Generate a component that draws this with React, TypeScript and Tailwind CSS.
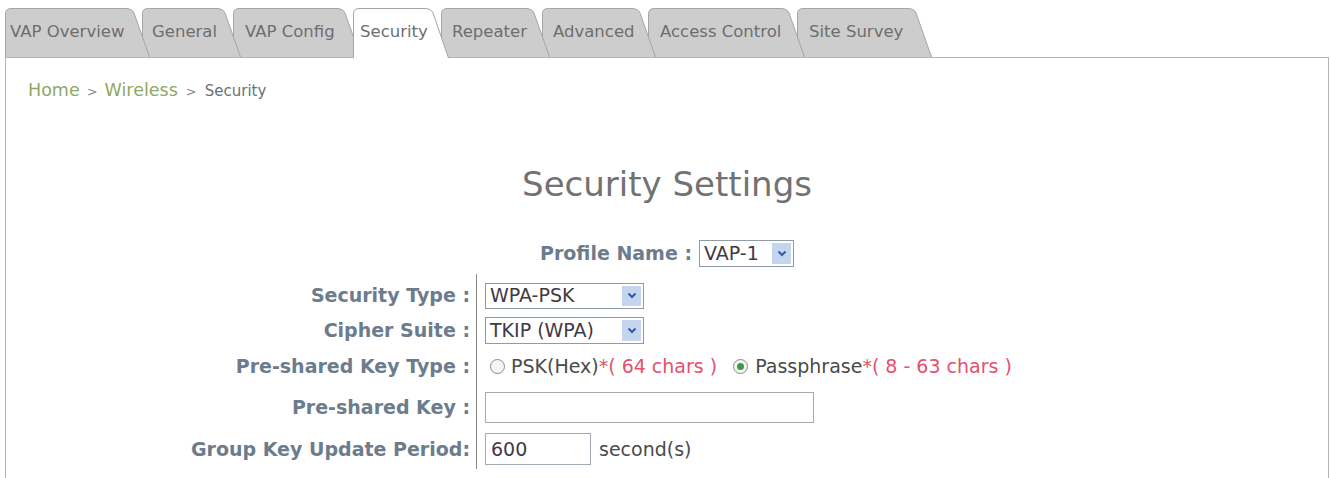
import type { JSX } from "react";

interface TabItem {
  label: string;
  width: number;
  widthClass: string;
  zClass: string;
  padClass: string;
  active?: boolean;
}

const tabs: TabItem[] = [
  { label: "VAP Overview", width: 145, widthClass: "w-[145px]", zClass: "z-[8]", padClass: "pl-[5px]" },
  { label: "General", width: 99, widthClass: "w-[99px]", zClass: "z-[7]", padClass: "pl-[10px]" },
  { label: "VAP Config", width: 128, widthClass: "w-[128px]", zClass: "z-[6]", padClass: "pl-[12px]" },
  { label: "Security", width: 96, widthClass: "w-[96px]", zClass: "z-[20]", padClass: "pl-[7px]", active: true },
  { label: "Repeater", width: 109, widthClass: "w-[109px]", zClass: "z-[4]", padClass: "pl-[11px]" },
  { label: "Advanced", width: 114, widthClass: "w-[114px]", zClass: "z-[3]", padClass: "pl-[11px]" },
  { label: "Access Control", width: 157, widthClass: "w-[157px]", zClass: "z-[2]", padClass: "pl-[12px]" },
  { label: "Site Survey", width: 135, widthClass: "w-[135px]", zClass: "z-[1]", padClass: "pl-[12px]" },
];

function Tab({ tab, first }: { tab: TabItem; first: boolean }): JSX.Element {
  const h = tab.active ? 50 : 49;
  const w = tab.width;
  const s = 18;
  const d = `M0.5 ${h} L0.5 6 Q0.5 0.5 6 0.5 L${w - s - 6} 0.5 Q${w - s} 0.5 ${w - s + 2} 5 L${w - 0.5} ${h}`;
  return (
    <div
      className={`relative flex shrink-0 items-center ${tab.widthClass} ${tab.zClass} ${tab.padClass} ${
        tab.active ? "h-[50px] pb-px" : "h-[49px]"
      } ${first ? "" : "-ml-[8px]"}`}
    >
      <svg className="absolute left-0 top-0" width={w} height={h} viewBox={`0 0 ${w} ${h}`}>
        <path d={d} fill={tab.active ? "#ffffff" : "#cdcdcd"} stroke="#a5a5a5" strokeWidth="1" />
      </svg>
      <span className="relative text-[16.5px] leading-none text-[#6e6e6e]">{tab.label}</span>
    </div>
  );
}

function Chevron(): JSX.Element {
  return (
    <svg width="10" height="7" viewBox="0 0 10 7">
      <polyline points="1.5,1.5 5,5 8.5,1.5" fill="none" stroke="#3559a6" strokeWidth="2" />
    </svg>
  );
}

function Select({ value, widthClass, heightClass }: { value: string; widthClass: string; heightClass: string }): JSX.Element {
  return (
    <div className={`flex items-stretch border border-[#8f9ba7] bg-white ${widthClass} ${heightClass}`}>
      <span className="flex flex-1 items-center pl-[4px] text-[19px] leading-none text-[#3f3a44]">{value}</span>
      <span className="my-[2px] mr-[2px] flex w-[19px] items-center justify-center bg-[#c5d5ef]">
        <Chevron />
      </span>
    </div>
  );
}

function Radio({ checked }: { checked?: boolean }): JSX.Element {
  return (
    <span className="flex h-[15px] w-[15px] shrink-0 items-center justify-center rounded-full border border-[#8b8b8b] bg-[#f5f5f5]">
      {checked ? <span className="h-[7px] w-[7px] rounded-full bg-[#3e9a45]" /> : null}
    </span>
  );
}

const labels: { text: string; h: string }[] = [
  { text: "Security Type :", h: "h-[35px]" },
  { text: "Cipher Suite :", h: "h-[35px]" },
  { text: "Pre-shared Key Type :", h: "h-[36px]" },
  { text: "Pre-shared Key :", h: "h-[46px]" },
  { text: "Group Key Update Period:", h: "h-[38px]" },
];

export default function App(): JSX.Element {
  return (
    <div className="min-h-[478px] bg-white pl-[5px] pr-[2px] pt-[8px] font-['DejaVu_Sans','Verdana',sans-serif]">
      <div className="relative z-10 flex h-[49px] items-start">
        {tabs.map((tab, i) => (
          <Tab key={tab.label} tab={tab} first={i === 0} />
        ))}
      </div>

      <div className="h-[421px] border-x border-t border-[#b5b5b5]">
        <div className="pl-[22px] pt-[20px] leading-[24px]">
          <span className="text-[17.5px] text-[#8fa866]">Home</span>
          <span className="mx-[7px] text-[13px] text-[#8a8a8a]">&gt;</span>
          <span className="text-[17.5px] text-[#8fa866]">Wireless</span>
          <span className="mx-[8px] text-[13px] text-[#8a8a8a]">&gt;</span>
          <span className="text-[15px] text-[#6f6f6f]">Security</span>
        </div>

        <h1 className="mt-[59px] text-center text-[34px] leading-[42px] text-[#727272]">Security Settings</h1>

        <div className="mt-[34px] flex h-[28px] items-center justify-center gap-[7px]">
          <span className="text-[19px] font-bold text-[#6c7c8c]">Profile Name :</span>
          <Select value="VAP-1" widthClass="w-[95px]" heightClass="h-[27px]" />
        </div>

        <div className="mt-[7px] flex">
          <div className="w-[470px] shrink-0 pb-[1px] pr-[6px] pt-[4px] text-right">
            {labels.map((l) => (
              <div key={l.text} className={`flex items-center justify-end text-[19px] font-bold text-[#6c7c8c] ${l.h}`}>
                {l.text}
              </div>
            ))}
          </div>
          <div className="flex flex-col border-l border-[#8a8a8a] pb-[1px] pl-[8px] pt-[4px] text-[19px] text-[#4a4a4a]">
            <div className="flex h-[35px] items-center">
              <Select value="WPA-PSK" widthClass="w-[159px]" heightClass="h-[26px]" />
            </div>
            <div className="flex h-[35px] items-center">
              <Select value="TKIP (WPA)" widthClass="w-[159px]" heightClass="h-[27px]" />
            </div>
            <div className="flex h-[36px] items-center whitespace-pre">
              <span className="ml-[5px]">
                <Radio />
              </span>
              <span className="ml-[6px]">PSK(Hex)</span>
              <span className="text-[#e5506c]">*( 64 chars )</span>
              <span className="ml-[16px]">
                <Radio checked />
              </span>
              <span className="ml-[7px]">Passphrase</span>
              <span className="text-[#e5506c]">*( 8 - 63 chars )</span>
            </div>
            <div className="flex h-[46px] items-center">
              <div className="h-[31px] w-[329px] border border-[#a2abb4] bg-white" />
            </div>
            <div className="flex h-[38px] items-center">
              <div className="flex h-[32px] w-[106px] items-center border border-[#a2abb4] bg-white pl-[5px] text-[19px] text-[#3f3a44]">
                600
              </div>
              <span className="ml-[8px]">second(s)</span>
            </div>
          </div>
        </div>
      </div>
    </div>
  );
}
